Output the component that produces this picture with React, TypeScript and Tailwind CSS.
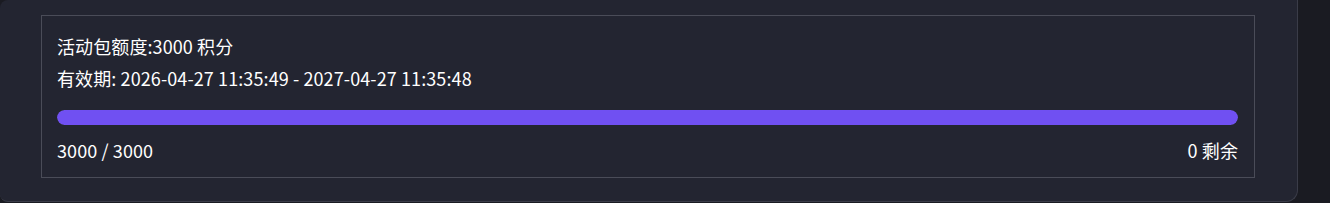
export default function App() {
	const used = 3000
	const total = 3000
	const pct = Math.min(100, (used / total) * 100)

	return (
		<div
			className="h-[203px] w-full bg-[#1a1b22] overflow-hidden"
			style={{ fontFamily: '"Noto Sans CJK SC", "Noto Sans", sans-serif' }}>
			<div className="h-[202px] w-[1298px] bg-[#232531] border-r border-b border-[#3a3c48] rounded-br-xl rounded-tl-lg rounded-bl-lg pt-[15px] pl-[41px]">
				<div className="w-[1214px] h-[163px] border border-[#4a4c58] pl-[15px] pr-4 pt-[14px] text-white text-[18px] leading-[32px] tracking-[0.1px]">
					<p>活动包额度:3000 积分</p>
					<p>有效期: 2026-04-27 11:35:49 - 2027-04-27 11:35:48</p>
					<div className="mt-4 h-[15px] w-full rounded-full bg-[#3a3c48] overflow-hidden">
						<div className="h-full rounded-full bg-[#7050f2]" style={{ width: `${pct}%` }} />
					</div>
					<div className="mt-[9px] flex justify-between">
						<span>
							{used} / {total}
						</span>
						<span>{total - used} 剩余</span>
					</div>
				</div>
			</div>
		</div>
	)
}
